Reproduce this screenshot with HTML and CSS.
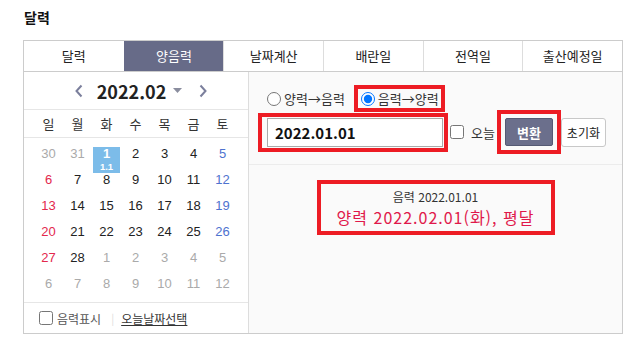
FILE: index.html
```html
<!DOCTYPE html>
<html lang="ko">

<head>
  <meta charset="UTF-8">
  <meta name="viewport" content="width=device-width, initial-scale=1.0">
  <title>달력</title>
  <link rel="stylesheet" href="styles.css">
</head>

<body>
  <h2 class="page-title">달력</h2>

  <div class="calendar-box">
    <ul class="tabs">
      <li>달력</li>
      <li class="active">양음력</li>
      <li>날짜계산</li>
      <li>배란일</li>
      <li>전역일</li>
      <li>출산예정일</li>
    </ul>

    <div class="box-body">
      <div class="cal">
        <div class="cal-head">
          <svg class="arrow" width="8" height="14" viewBox="0 0 8 14"><path d="M6.5 1.5 1.5 7l5 5.5" fill="none" stroke="#7b7f9c" stroke-width="2"/></svg>
          <span class="month">2022.02</span>
          <svg class="caret" width="9" height="5" viewBox="0 0 9 5"><path d="M0 0h9L4.5 5z" fill="#8a8d9e"/></svg>
          <svg class="arrow next" width="8" height="14" viewBox="0 0 8 14"><path d="M1.5 1.5 6.5 7l-5 5.5" fill="none" stroke="#7b7f9c" stroke-width="2"/></svg>
        </div>

        <div class="week">
          <span>일</span><span>월</span><span>화</span><span>수</span><span>목</span><span>금</span><span>토</span>
        </div>

        <div class="days">
          <span class="other">30</span><span class="other">31</span><span class="selected"><b>1</b><small>1.1</small></span><span>2</span><span>3</span><span>4</span><span class="sat">5</span>
          <span class="sun">6</span><span>7</span><span>8</span><span>9</span><span>10</span><span>11</span><span class="sat">12</span>
          <span class="sun">13</span><span>14</span><span>15</span><span>16</span><span>17</span><span>18</span><span class="sat">19</span>
          <span class="sun">20</span><span>21</span><span>22</span><span>23</span><span>24</span><span>25</span><span class="sat">26</span>
          <span class="sun">27</span><span>28</span><span class="other">1</span><span class="other">2</span><span class="other">3</span><span class="other">4</span><span class="other">5</span>
          <span class="other">6</span><span class="other">7</span><span class="other">8</span><span class="other">9</span><span class="other">10</span><span class="other">11</span><span class="other">12</span>
        </div>

        <div class="cal-foot">
          <label class="check"><input type="checkbox"> 음력표시</label>
          <span class="bar">|</span>
          <a href="#" class="today-link">오늘날짜선택</a>
        </div>
      </div>

      <div class="conv">
        <div class="conv-form">
          <div class="radio-row">
            <label class="radio"><input type="radio" name="mode">양력→음력</label>
            <span class="mark mark-radio">
              <label class="radio"><input type="radio" name="mode" checked>음력→양력</label>
            </span>
          </div>

          <div class="input-row">
            <span class="mark mark-input"><input class="date-input" type="text" value="2022.01.01"></span>
            <label class="check today"><input type="checkbox"> 오늘</label>
            <span class="mark mark-btn"><button class="btn-convert">변환</button></span>
            <button class="btn-reset">초기화</button>
          </div>
        </div>

        <div class="result">
          <p class="result-from">음력 2022.01.01</p>
          <p class="result-to">양력 2022.02.01(화), 평달</p>
        </div>
      </div>
    </div>
  </div>
</body>

</html>
```

FILE: styles.css
```css
html,
body {
  margin: 0;
  background-color: #fff;
  color: #222;
  font-family: "Noto Sans CJK KR", "Noto Sans", sans-serif;
}

.page-title {
  margin: 0;
  padding: 9px 0 0 24px;
  height: 40px;
  box-sizing: border-box;
  font-size: 14px;
  line-height: 17px;
  font-weight: bold;
  color: #111;
}

.calendar-box {
  margin-left: 23px;
  width: 600px;
  border: 1px solid #ccc;
  box-sizing: border-box;
}

/* 탭 */
.tabs {
  display: grid;
  grid-template-columns: repeat(6, 1fr);
  margin: 0;
  padding: 0;
  list-style: none;
  border-bottom: 1px solid #ccc;
}

.tabs li {
  height: 30px;
  line-height: 30px;
  text-align: center;
  font-size: 13px;
  color: #222;
  border-left: 1px solid #ddd;
}

.tabs li:first-child {
  border-left: none;
}

.tabs li.active {
  background-color: #676b88;
  color: #fff;
  border-left-color: #676b88;
}

.box-body {
  display: flex;
  height: 261px;
}

/* 달력 */
.cal {
  width: 224px;
  border-right: 1px solid #ddd;
  display: flex;
  flex-direction: column;
}

.cal-head {
  height: 37px;
  display: flex;
  align-items: center;
  justify-content: center;
  border-bottom: 1px solid #e6e6e6;
  padding-left: 10px;
}

.cal-head .month {
  font-size: 18px;
  font-weight: bold;
  color: #222;
  margin: 0 7px 0 14px;
}

.cal-head .caret {
  margin-right: 17px;
}

.week {
  display: grid;
  grid-template-columns: repeat(7, 29px);
  padding: 0 11px 0 10px;
  height: 27px;
  line-height: 27px;
  border-bottom: 1px solid #e6e6e6;
  font-size: 13px;
  color: #333;
  text-align: center;
}

.days {
  display: grid;
  grid-template-columns: repeat(7, 29px);
  grid-auto-rows: 26px;
  padding: 9px 11px 0 10px;
  height: 165px;
  box-sizing: border-box;
  border-bottom: 1px solid #e6e6e6;
  font-family: "Liberation Sans", Arial, sans-serif;
  font-size: 13px;
  text-align: center;
}

.days span {
  line-height: 14px;
  color: #222;
}

.days .sun {
  color: #e3284d;
}

.days .sat {
  color: #4e72cf;
}

.days .other {
  color: #aaa;
}

.days .selected {
  margin: 0 1px;
  background-color: #7cbce9;
  color: #fff;
  display: flex;
  flex-direction: column;
  align-items: center;
}

.days .selected b {
  font-size: 13px;
  line-height: 13px;
}

.days .selected small {
  margin-top: 2px;
  font-size: 9.5px;
  line-height: 10px;
  font-weight: bold;
}

.cal-foot {
  flex: 1;
  display: flex;
  align-items: center;
  padding-left: 15px;
  font-size: 12px;
  color: #555;
}

.check {
  display: flex;
  align-items: center;
}

.check input {
  width: 14px;
  height: 14px;
  margin: 0 4px 0 0;
}

.bar {
  color: #ddd;
  margin: 0 7px 0 10px;
  font-size: 11px;
}

.today-link {
  color: #333;
  text-decoration: underline;
}

/* 양음력 변환 */
.conv {
  flex: 1;
  background-color: #fafafa;
}

.conv-form {
  padding: 13px 0 10px 18px;
  border-bottom: 1px solid #ececec;
}

.radio-row {
  display: flex;
  align-items: center;
  height: 27px;
}

.radio {
  display: flex;
  align-items: center;
  font-size: 13px;
  color: #333;
}

.radio input {
  width: 14px;
  height: 14px;
  margin: 0 3px 0 0;
}

.mark {
  border: 4px solid #ed1c24;
  display: inline-flex;
  align-items: center;
}

.mark-radio {
  margin-left: 9px;
  height: 27px;
  box-sizing: border-box;
  padding: 0 2px 0 3px;
}

.input-row {
  display: flex;
  align-items: center;
  margin: -2px 0 0 -9px;
}

.mark-input {
  padding: 1px 1px 1px 5px;
}

.date-input {
  width: 176px;
  height: 29px;
  box-sizing: border-box;
  border: 1px solid #aaa;
  padding: 0 7px;
  font-family: inherit;
  font-size: 15px;
  font-weight: bold;
  color: #111;
  background-color: #fff;
}

.today {
  margin-left: 2px;
  font-size: 13px;
  color: #333;
}

.today input {
  margin-right: 7px;
}

.mark-btn {
  margin-left: 2px;
  padding: 4px;
}

.btn-convert {
  width: 48px;
  height: 28px;
  border: 1px solid #555a74;
  border-radius: 2px;
  background-color: #6b6f8c;
  color: #fff;
  font-family: inherit;
  font-size: 13px;
  font-weight: bold;
}

.btn-reset {
  width: 45px;
  height: 29px;
  border: 1px solid #c8c8c8;
  border-radius: 3px;
  background-color: #fff;
  color: #222;
  font-family: inherit;
  font-size: 12px;
  padding: 0;
}

.result {
  width: 238px;
  margin: 15px auto 0;
  border: 4px solid #ed1c24;
  box-sizing: border-box;
  padding: 4px 0 3px;
  text-align: center;
}

.result p {
  margin: 0;
}

.result-from {
  font-size: 12px;
  line-height: 18px;
  color: #333;
}

.result-to {
  font-size: 16px;
  line-height: 22px;
  color: #e0184b;
  letter-spacing: 1px;
}
```
